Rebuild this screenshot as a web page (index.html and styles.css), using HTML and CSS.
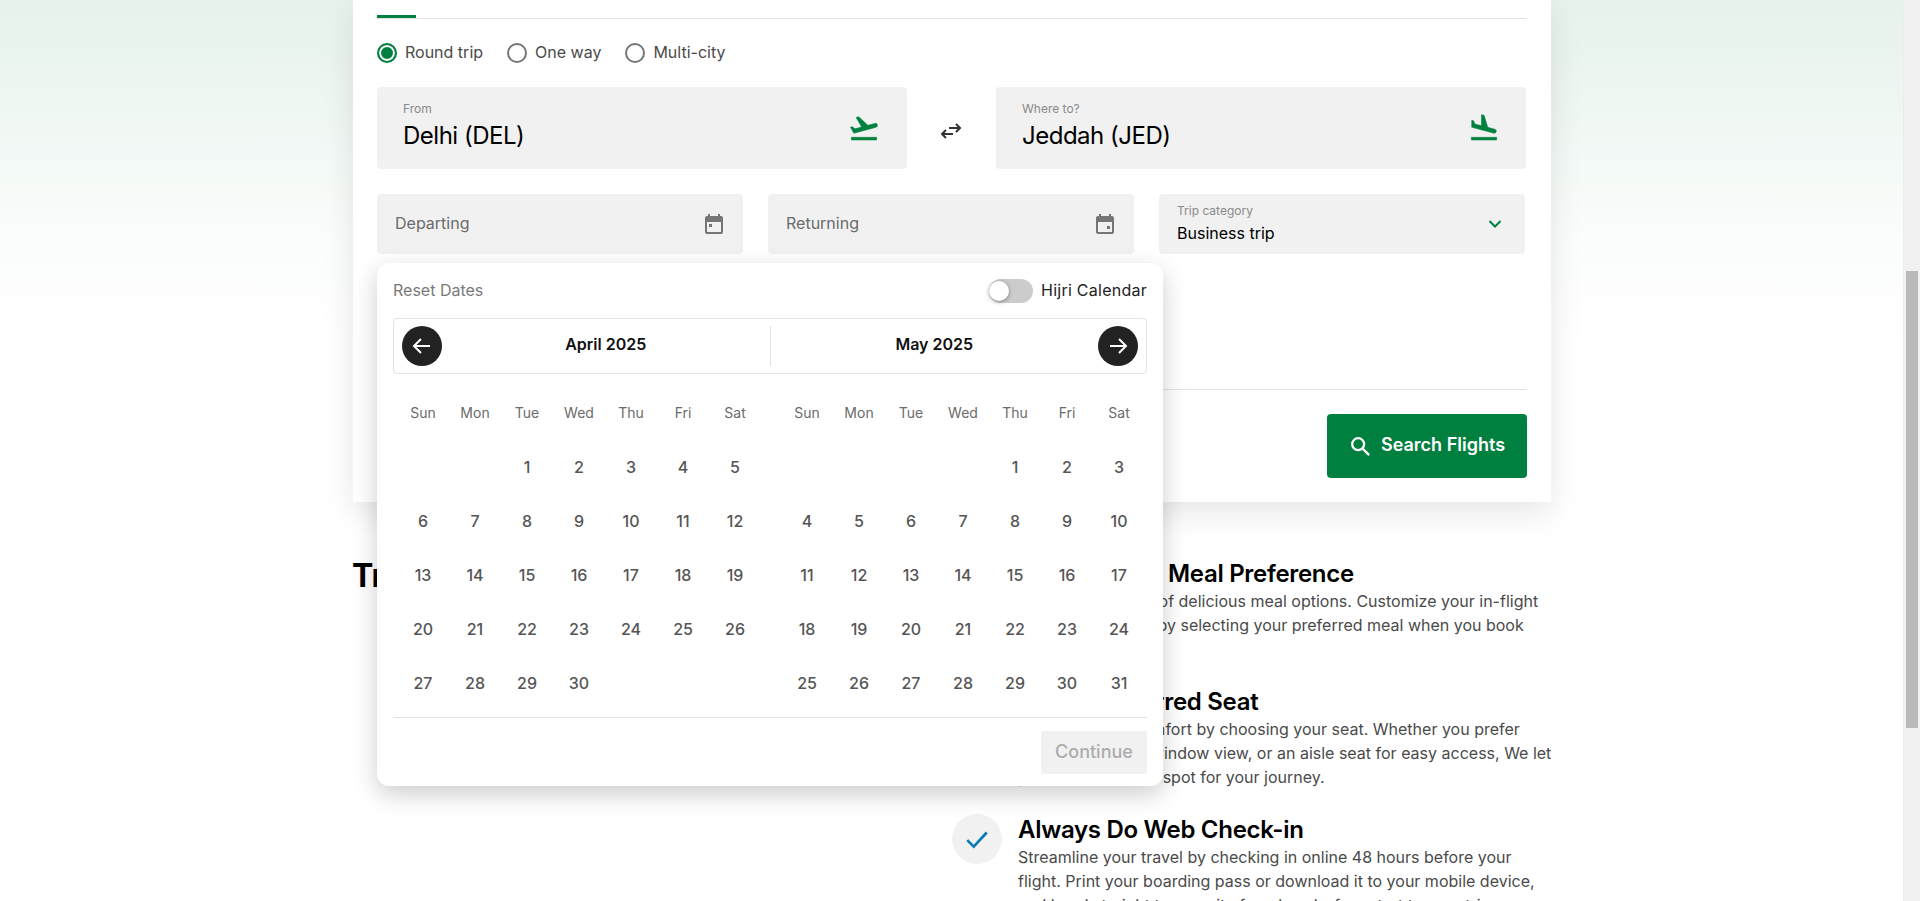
FILE: index.html
```html
<!DOCTYPE html>
<html lang="en">

<head>
    <meta charset="UTF-8">
    <meta name="viewport" content="width=device-width, initial-scale=1.0">
    <title>Book a Flight</title>
    <link rel="stylesheet" href="styles.css">
</head>

<body>

    <main class="page">
        <section class="card">
            <div class="tabs"><span class="tab-active"></span></div>

            <div class="trip-types">
                <label class="radio"><span class="radio-dot checked"></span><span class="lift">Round trip</span></label>
                <label class="radio"><span class="radio-dot"></span><span class="lift">One way</span></label>
                <label class="radio"><span class="radio-dot"></span><span class="lift">Multi-city</span></label>
            </div>

            <div class="route">
                <div class="field field-route">
                    <div>
                        <div class="field-label">From</div>
                        <div class="field-value">Delhi (DEL)</div>
                    </div>
                    <svg class="plane" viewBox="0 0 24 24"><path d="M2.5 19h19v2h-19v-2zm19.57-9.36c-.21-.8-1.04-1.28-1.84-1.06L14.92 10l-6.9-6.43-1.93.51 4.14 7.17-4.97 1.33-1.97-1.54-1.45.39 1.82 3.16.77 1.33 1.6-.43 5.31-1.42 4.35-1.16L21 11.49c.81-.23 1.28-1.05 1.07-1.85z" /></svg>
                </div>
                <svg class="swap" viewBox="0 0 24 24"><path d="M3 15h11M7 11l-4 4 4 4M21 9H10M17 5l4 4-4 4" /></svg>
                <div class="field field-route field-to">
                    <div>
                        <div class="field-label">Where to?</div>
                        <div class="field-value">Jeddah (JED)</div>
                    </div>
                    <svg class="plane" viewBox="0 0 24 24"><path d="M2.5 19h19v2h-19v-2zm7.18-5.73l4.35 1.16 5.31 1.42c.8.21 1.62-.26 1.84-1.06.21-.8-.26-1.62-1.06-1.84l-5.31-1.42-2.76-9.02L10.120 2v8.28L5.150 8.950l-.93-2.32-1.45-.39v5.170l1.6.43 5.31 1.43z" /></svg>
                </div>
            </div>

            <div class="details">
                <div class="field field-date">
                    <span class="lift">Departing</span>
                    <svg class="cal" viewBox="0 0 24 24"><path fill-rule="evenodd" d="M19 4h-1V2h-2v2H8V2H6v2H5c-1.100 0-2 .9-2 2v14c0 1.100.9 2 2 2h14c1.100 0 2-.9 2-2V6c0-1.100-.9-2-2-2zm0 16H5V10h14v10zM7 12h3v3H7z" /></svg>
                </div>
                <div class="field field-date">
                    <span class="lift">Returning</span>
                    <svg class="cal" viewBox="0 0 24 24"><path fill-rule="evenodd" d="M19 4h-1V2h-2v2H8V2H6v2H5c-1.100 0-2 .9-2 2v14c0 1.100.9 2 2 2h14c1.100 0 2-.9 2-2V6c0-1.100-.9-2-2-2zm0 16H5V10h14v10zM14 14h3v3h-3z" /></svg>
                </div>
                <div class="field field-select">
                    <div>
                        <div class="field-label select-label">Trip category</div>
                        <div class="select-value">Business trip</div>
                    </div>
                    <svg class="chevron" viewBox="0 0 14 8"><path d="M1.5 1l5.5 5.500L12.500 1" /></svg>
                </div>
            </div>

            <div class="actions">
                <button class="search-btn">
                    <svg viewBox="0 0 24 24"><circle cx="10" cy="10" r="6.500" /><path d="M15 15l7 7" /></svg>
                    <span class="lift">Search Flights</span>
                </button>
            </div>
        </section>

        <section class="tips">
            <h2 class="tips-title">Travel Tips</h2>
            <div class="tips-list">
                <div class="tip">
                    <span class="tip-icon"><svg viewBox="0 0 24 24"><path d="M3 13l6 6L21 6" /></svg></span>
                    <div>
                        <h3>Choose your Meal Preference</h3>
                        <p>Enjoy a rich range of delicious meal options. Customize your in-flight dining experience by selecting your preferred meal when you book your&nbsp;flight.</p>
                    </div>
                </div>
                <div class="tip">
                    <span class="tip-icon"><svg viewBox="0 0 24 24"><path d="M3 13l6 6L21 6" /></svg></span>
                    <div>
                        <h3>Select Preferred Seat</h3>
                        <p>Maximize your comfort by choosing your seat. Whether you prefer a&nbsp;glorious scenic window view, or an aisle seat for easy access, We let you pick the prime spot for your journey.</p>
                    </div>
                </div>
                <div class="tip">
                    <span class="tip-icon"><svg viewBox="0 0 24 24"><path d="M3 13l6 6L21 6" /></svg></span>
                    <div>
                        <h3>Always Do Web Check-in</h3>
                        <p>Streamline your travel by checking in online 48 hours before your flight. Print your boarding pass or download it to your mobile device, and head straight to security for a hassle-free start to your trip.</p>
                    </div>
                </div>
            </div>
        </section>

        <div class="datepicker">
            <div class="picker-top">
                <span class="reset lift">Reset Dates</span>
                <div class="hijri"><span class="toggle"><span class="knob"></span></span><span class="lift">Hijri Calendar</span></div>
            </div>
            <div class="month-bar">
                <button class="nav-btn"><svg viewBox="0 0 24 24"><path d="M20 12H4M11 5l-7 7 7 7" /></svg></button>
                <span class="month">April 2025</span>
                <span class="month-sep"></span>
                <span class="month">May 2025</span>
                <button class="nav-btn"><svg viewBox="0 0 24 24"><path d="M4 12h16M13 5l7 7-7 7" /></svg></button>
            </div>
            <div class="months" id="months"></div>
            <div class="picker-foot"><button class="continue">Continue</button></div>
        </div>
    </main>

    <aside class="scrollbar"><span class="thumb"></span></aside>

    <script>
        const days = ['Sun', 'Mon', 'Tue', 'Wed', 'Thu', 'Fri', 'Sat'];

        // offset = weekday of the 1st
        function buildMonth(offset, total) {
            const grid = document.createElement('div');
            grid.className = 'month-grid';
            days.forEach(d => {
                const el = document.createElement('span');
                el.className = 'weekday';
                el.textContent = d;
                grid.appendChild(el);
            });
            for (let i = 0; i < offset; i++) {
                grid.appendChild(document.createElement('span'));
            }
            for (let n = 1; n <= total; n++) {
                const el = document.createElement('span');
                el.className = 'day';
                el.textContent = n;
                grid.appendChild(el);
            }
            return grid;
        }

        const months = document.getElementById('months');
        months.appendChild(buildMonth(2, 30));
        months.appendChild(buildMonth(4, 31));
    </script>

</body>

</html>
```

FILE: styles.css
```css
* {
    box-sizing: border-box;
}

html,
body {
    margin: 0;
    height: 901px;
    overflow: hidden;
}

body {
    display: flex;
    font-family: "Inter", "Liberation Sans", sans-serif;
    color: #4a4a4a;
    background: #fff;
}

button {
    font-family: inherit;
    border: none;
}

/* text sits a little higher than its box centre */
.lift {
    margin-bottom: 2px;
}

.page {
    position: relative;
    flex: 1;
    padding: 0 352px 0 353px;
    background: linear-gradient(to bottom, #e6f2ec 0, #fafdfb 240px, #fff 340px);
    overflow: hidden;
}

.scrollbar {
    width: 17px;
    padding: 271px 2px 0;
    background: #f1f1f1;
    border-left: 1px solid #ececec;
}

.thumb {
    display: block;
    height: 457px;
    background: #b9b9b9;
}

/* search card */
.card {
    height: 502px;
    padding: 15px 24px 0;
    background: #fff;
    box-shadow: 0 10px 30px rgba(0, 0, 0, 0.1);
}

.tabs {
    height: 4px;
    border-bottom: 1px solid #e2e2e2;
}

.tab-active {
    display: block;
    width: 39px;
    height: 3px;
    background: #00803f;
}

.trip-types {
    display: flex;
    gap: 24px;
    height: 20px;
    margin-top: 24px;
}

.radio {
    display: flex;
    align-items: center;
    gap: 8px;
    font-size: 16px;
}

.radio-dot {
    width: 20px;
    height: 20px;
    border: 2px solid #757575;
    border-radius: 50%;
}

.radio-dot.checked {
    border-color: #00803f;
    background: #00803f;
    box-shadow: inset 0 0 0 2px #fff;
}

.field {
    display: flex;
    justify-content: space-between;
    align-items: center;
    background: #f1f1f1;
    border-radius: 4px;
}

.route {
    display: flex;
    align-items: center;
    margin-top: 24px;
}

.field-route {
    width: 530px;
    height: 82px;
    padding: 0 27px 4px 26px;
}

.field-to {
    margin-left: 1px;
    padding-right: 26px;
}

.field-label {
    font-size: 12px;
    line-height: 16px;
    margin-bottom: 4px;
    color: #8a8a8a;
}

.field-value {
    font-size: 24px;
    line-height: 30px;
    letter-spacing: -0.5px;
    color: #000;
}

.plane {
    width: 32px;
    height: 32px;
    margin-top: 4px;
    fill: #00803f;
    stroke: #00803f;
    stroke-width: 0.4;
}

.swap {
    width: 24px;
    height: 24px;
    margin: 6px 32px 0;
    fill: none;
    stroke: #333;
    stroke-width: 2;
}

.details {
    display: flex;
    gap: 25px;
    margin-top: 25px;
}

.field-date {
    width: 366px;
    height: 60px;
    padding: 0 17px 0 18px;
    font-size: 16px;
    color: #6b6b6b;
}

.cal {
    width: 24px;
    height: 24px;
    fill: #757575;
}

.field-select {
    width: 366px;
    height: 60px;
    padding: 0 23px 1px 18px;
}

.select-label {
    margin-bottom: 2px;
}

.select-value {
    font-size: 16px;
    line-height: 24px;
    color: #000;
}

.chevron {
    width: 14px;
    height: 8px;
    fill: none;
    stroke: #00803f;
    stroke-width: 2;
}

.actions {
    display: flex;
    justify-content: flex-end;
    margin-top: 135px;
    padding-top: 24px;
    border-top: 1px solid #e2e2e2;
}

.search-btn {
    display: flex;
    align-items: center;
    justify-content: center;
    gap: 10px;
    width: 200px;
    height: 64px;
    font-size: 18px;
    font-weight: 600;
    color: #fff;
    background: #00803f;
    border-radius: 4px;
}

.search-btn svg {
    width: 22px;
    height: 22px;
    fill: none;
    stroke: #fff;
    stroke-width: 2.500;
}

.search-btn .lift {
    margin-bottom: 4px;
}

/* tips below the card */
.tips {
    display: flex;
    justify-content: space-between;
    padding-top: 56px;
}

.tips-title {
    margin: -2px 0 0 -1px;
    font-size: 32px;
    line-height: 40px;
    font-weight: 700;
    color: #000;
}

.tips-list {
    display: flex;
    flex-direction: column;
    gap: 25px;
    width: 605px;
    margin-right: -6px;
}

.tip {
    display: flex;
    gap: 16px;
}

.tip h3 {
    margin: 0;
    font-size: 24px;
    line-height: 31px;
    font-weight: 600;
    letter-spacing: -0.3px;
    color: #000;
}

.tip p {
    margin: 0;
    font-size: 16px;
    line-height: 24px;
}

.tip-icon {
    display: flex;
    flex: none;
    align-items: center;
    justify-content: center;
    width: 50px;
    height: 50px;
    border-radius: 50%;
    background: #f1f1f1;
}

.tip-icon svg {
    width: 26px;
    height: 26px;
    fill: none;
    stroke: #0a78b8;
    stroke-width: 2.500;
}

/* calendar popup */
.datepicker {
    position: absolute;
    left: 377px;
    top: 263px;
    width: 786px;
    height: 523px;
    padding: 0 16px;
    background: #fff;
    border-radius: 12px;
    box-shadow: 0 8px 24px rgba(0, 0, 0, 0.2);
}

.picker-top {
    display: flex;
    justify-content: space-between;
    align-items: center;
    height: 55px;
    font-size: 16px;
}

.reset {
    color: #7a7a7a;
}

.hijri {
    display: flex;
    align-items: center;
    gap: 8px;
    letter-spacing: 0.25px;
    color: #222;
}

.toggle {
    display: block;
    width: 44px;
    height: 24px;
    padding: 2px 0;
    background: #ccc;
    border-radius: 12px;
}

.knob {
    display: block;
    width: 20px;
    height: 20px;
    background: #fff;
    border-radius: 50%;
    box-shadow: 0 1px 4px rgba(0, 0, 0, 0.4);
}

.month-bar {
    display: flex;
    align-items: center;
    height: 56px;
    padding: 0 8px;
    border: 1px solid #e2e2e2;
    border-radius: 4px;
}

.nav-btn {
    display: flex;
    flex: none;
    align-items: center;
    justify-content: center;
    width: 40px;
    height: 40px;
    padding: 0;
    background: #222;
    border-radius: 50%;
}

.nav-btn svg {
    width: 24px;
    height: 24px;
    fill: none;
    stroke: #fff;
    stroke-width: 2;
}

.month {
    flex: 1;
    margin-bottom: 4px;
    text-align: center;
    font-size: 16px;
    font-weight: 600;
    color: #111;
}

.month-sep {
    width: 1px;
    height: 40px;
    background: #e2e2e2;
}

.months {
    display: flex;
    gap: 20px;
    padding: 11px 4px 0;
}

.month-grid {
    display: grid;
    grid-template-columns: repeat(7, 52px);
    grid-auto-rows: 54px;
    align-items: center;
    justify-items: center;
    width: 364px;
}

.weekday {
    font-size: 14px;
    color: #6b6b6b;
}

.day {
    margin-top: 2px;
    font-size: 16px;
    font-weight: 500;
    color: #555;
}

.picker-foot {
    position: absolute;
    left: 16px;
    right: 16px;
    top: 454px;
    display: flex;
    justify-content: flex-end;
    padding-top: 13px;
    border-top: 1px solid #e2e2e2;
}

.continue {
    width: 106px;
    height: 43px;
    padding-bottom: 4px;
    font-size: 18px;
    font-weight: 500;
    color: #acacac;
    background: #f1f1f1;
    border-radius: 2px;
}
```
